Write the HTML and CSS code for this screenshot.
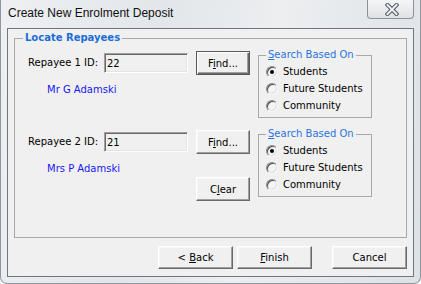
FILE: index.html
```html
<!DOCTYPE html>
<html lang="en">
  <head>
    <meta charset="UTF-8" />
    <title>Create New Enrolment Deposit</title>
    <link rel="stylesheet" href="styles.css">
  </head>
  <body>
    <div class="window">
      <div class="titlebar">
        <span class="title">Create New Enrolment Deposit</span>
        <button class="close" type="button">
          <svg width="14" height="13" viewBox="0 0 14 13">
            <path d="M2.5 2 L11.5 11 M11.5 2 L2.5 11" stroke="#4f5661" stroke-width="4" stroke-linecap="square" />
            <path d="M2.5 2 L11.5 11 M11.5 2 L2.5 11" stroke="#eef0f2" stroke-width="2" stroke-linecap="square" />
          </svg>
        </button>
      </div>

      <div class="client">
        <fieldset class="group">
          <legend>Locate Repayees</legend>

          <div class="repayee">
            <div class="id-col">
              <div class="id-line">
                <label for="rep1">Repayee 1 ID:</label>
                <input class="id-box" id="rep1" value="22" readonly />
              </div>
              <div class="name">Mr G Adamski</div>
            </div>
            <div class="btn-col">
              <button class="btn btn-small default" type="button">F<u>i</u>nd...</button>
            </div>
            <fieldset class="search">
              <legend><u>S</u>earch Based On</legend>
              <div class="radio-row"><span class="radio checked"></span>Students</div>
              <div class="radio-row"><span class="radio"></span>Future Students</div>
              <div class="radio-row"><span class="radio"></span>Community</div>
            </fieldset>
          </div>

          <div class="repayee">
            <div class="id-col">
              <div class="id-line">
                <label for="rep2">Repayee 2 ID:</label>
                <input class="id-box" id="rep2" value="21" readonly />
              </div>
              <div class="name">Mrs P Adamski</div>
            </div>
            <div class="btn-col">
              <button class="btn btn-small" type="button">F<u>i</u>nd...</button>
              <button class="btn btn-small clear" type="button">C<u>l</u>ear</button>
            </div>
            <fieldset class="search">
              <legend><u>S</u>earch Based On</legend>
              <div class="radio-row"><span class="radio checked"></span>Students</div>
              <div class="radio-row"><span class="radio"></span>Future Students</div>
              <div class="radio-row"><span class="radio"></span>Community</div>
            </fieldset>
          </div>
        </fieldset>

        <div class="actions">
          <button class="btn btn-wide" type="button">&lt; <u>B</u>ack</button>
          <button class="btn btn-wide" type="button"><u>F</u>inish</button>
          <button class="btn btn-wide cancel" type="button">Cancel</button>
        </div>
      </div>
    </div>
  </body>
</html>
```

FILE: styles.css
```css
body {
  margin: 0;
  padding: 0;
  background-color: #ffffff;
  font-family: "DejaVu Sans", sans-serif;
  font-size: 10px;
  color: #000000;
}

.window {
  width: 421px;
  height: 284px;
  box-sizing: border-box;
  border: 1px solid #8e979f;
  border-top: none;
  border-radius: 0 0 7px 7px;
  background: linear-gradient(100deg, #eef0f2 0%, #e2e6ea 35%, #eceef0 60%, #dde2e7 100%);
  display: flex;
  flex-direction: column;
}

.titlebar {
  height: 28px;
  display: flex;
  justify-content: space-between;
  align-items: flex-start;
  padding-left: 7px;
}

.title {
  font-family: "Liberation Sans", Arial, sans-serif;
  font-size: 12px;
  line-height: 15px;
  padding-top: 6px;
  color: #111111;
}

.close {
  width: 47px;
  height: 19px;
  margin-right: 6px;
  padding: 0;
  border: 1px solid #8d9299;
  border-top: none;
  border-radius: 0 0 4px 4px;
  background: linear-gradient(#f4f5f6, #dfe2e5);
  display: flex;
  align-items: center;
  justify-content: center;
  padding-top: 1px;
}

.close svg {
  margin-left: 2px;
}

.client {
  height: 249px;
  margin: 0 6px;
  box-sizing: border-box;
  border: 1px solid #6f7780;
  background-color: #f0f0f0;
  padding: 3px 6px 0 6px;
}

.group {
  margin: 0;
  padding: 5px 0 0 0;
  height: 206px;
  box-sizing: border-box;
  border: 1px solid #a8a8a8;
  min-inline-size: 0;
}

.group > legend {
  margin-left: 8px;
  padding: 0 2px;
  font-weight: bold;
  line-height: 12px;
  color: #1b6dd8;
}

.repayee {
  display: flex;
  align-items: flex-start;
  height: 79px;
  padding-left: 13px;
}

.id-col {
  width: 160px;
}

.id-line {
  display: flex;
  align-items: center;
  margin-top: 4px;
}

.id-line label {
  width: 76px;
  line-height: 20px;
}

.id-box {
  width: 84px;
  height: 20px;
  box-sizing: border-box;
  margin: 0;
  padding: 0 0 0 2px;
  font-family: "DejaVu Sans", sans-serif;
  font-size: 10px;
  color: #000000;
  background-color: #f0f0f0;
  border: 1px solid;
  border-color: #a0a0a0 #ffffff #ffffff #a0a0a0;
  box-shadow: inset 1px 1px #696969, inset -1px -1px #e3e3e3;
  outline: none;
}

.name {
  margin: 10px 0 0 19px;
  line-height: 13px;
  color: #1717f2;
}

.btn-col {
  margin-left: 8px;
  margin-top: 2px;
  display: flex;
  flex-direction: column;
}

.btn {
  margin: 0;
  padding: 0;
  font-family: "DejaVu Sans", sans-serif;
  font-size: 10px;
  color: #000000;
  background-color: #f0f0f0;
  border: 1px solid;
  border-color: #ffffff #696969 #696969 #ffffff;
  box-shadow: inset -1px -1px #a0a0a0, inset 1px 1px #f7f7f7;
}

.btn-small {
  width: 54px;
  height: 24px;
}

.btn.default {
  border-color: #5a5a5a;
  box-shadow: inset 1px 1px #ffffff, inset -1px -1px #696969, inset -2px -2px #a0a0a0;
}

.clear {
  margin-top: 23px;
}

.search {
  margin: 0 0 0 8px;
  padding: 2px 0 0 0;
  width: 114px;
  height: 69px;
  box-sizing: border-box;
  border: 1px solid #a8a8a8;
  min-inline-size: 0;
}

.search legend {
  margin-left: 7px;
  padding: 0 2px;
  line-height: 12px;
  color: #2a73dc;
}

.radio-row {
  display: flex;
  align-items: center;
  height: 17px;
  padding-left: 7px;
}

.radio {
  width: 12px;
  height: 12px;
  box-sizing: border-box;
  margin-right: 5px;
  border-radius: 50%;
  border: 1px solid;
  border-color: #8a8a8a #f8f8f8 #f8f8f8 #8a8a8a;
  box-shadow: inset 1px 1px #505050, inset -1px -1px #dcdcdc;
  background-color: #f4f4f4;
  display: flex;
  align-items: center;
  justify-content: center;
}

.radio.checked::after {
  content: "";
  width: 4px;
  height: 4px;
  border-radius: 50%;
  background-color: #000000;
}

.actions {
  display: flex;
  justify-content: flex-end;
  gap: 4px;
  margin-top: 8px;
}

.btn-wide {
  width: 75px;
  height: 23px;
}

.cancel {
  margin-left: 16px;
}
```
